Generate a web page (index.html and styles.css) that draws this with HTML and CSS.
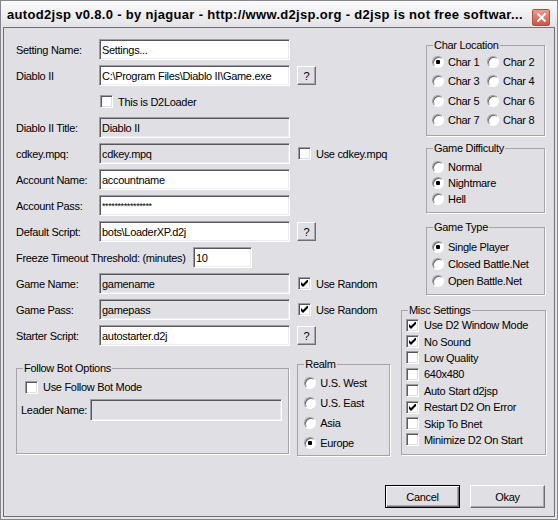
FILE: index.html
```html
<!DOCTYPE html>
<html lang="en">
<head>
	<meta charset="utf-8">
	<title>autod2jsp</title>
	<link rel="stylesheet" href="styles.css">
</head>
<body>
	<div class="window">
		<div class="titlebar">
			<span class="title">autod2jsp v0.8.0 - by njaguar - http://www.d2jsp.org - d2jsp is not free softwar...</span>
			<button class="close">
				<svg width="11" height="11" viewBox="0 0 11 11"><path d="M1.5 1.5 L9.5 9.5 M9.5 1.5 L1.5 9.5" stroke="#fff" stroke-width="2"/></svg>
			</button>
		</div>

		<div class="client">
			<div class="main">
				<div class="left">
					<div class="form">
						<label>Setting Name:</label>
						<input class="field" value="Settings...">
						<span></span>

						<label>Diablo II</label>
						<input class="field" value="C:\Program Files\Diablo II\Game.exe">
						<span class="extra"><button class="btn q">?</button></span>

						<span></span>
						<label class="check"><input type="checkbox"> This is D2Loader</label>
						<span></span>

						<label>Diablo II Title:</label>
						<input class="field" value="Diablo II" disabled>
						<span></span>

						<label>cdkey.mpq:</label>
						<input class="field" value="cdkey.mpq" disabled>
						<span class="extra"><label class="check"><input type="checkbox"> Use cdkey.mpq</label></span>

						<label>Account Name:</label>
						<input class="field" value="accountname">
						<span></span>

						<label>Account Pass:</label>
						<input class="field pass" value="****************">
						<span></span>

						<label>Default Script:</label>
						<input class="field" value="bots\LoaderXP.d2j">
						<span class="extra"><button class="btn q">?</button></span>

						<div class="freeze">
							<label>Freeze Timeout Threshold: (minutes)</label>
							<input class="field short" value="10">
						</div>

						<label>Game Name:</label>
						<input class="field" value="gamename" disabled>
						<span class="extra"><label class="check"><input type="checkbox" checked> Use Random</label></span>

						<label>Game Pass:</label>
						<input class="field" value="gamepass" disabled>
						<span class="extra"><label class="check"><input type="checkbox" checked> Use Random</label></span>

						<label>Starter Script:</label>
						<input class="field" value="autostarter.d2j">
						<span class="extra"><button class="btn q">?</button></span>
					</div>

					<div class="lower">
						<fieldset class="follow">
							<legend>Follow Bot Options</legend>
							<div class="follow-body">
								<label class="check follow-check"><input type="checkbox"> Use Follow Bot Mode</label>
								<div class="leader">
									<label>Leader Name:</label>
									<input class="field leader-field" disabled>
								</div>
							</div>
						</fieldset>

						<fieldset class="realm">
							<legend>Realm</legend>
							<div class="list realm-list">
								<label class="opt"><input type="radio" name="realm"> U.S. West</label>
								<label class="opt"><input type="radio" name="realm"> U.S. East</label>
								<label class="opt"><input type="radio" name="realm"> Asia</label>
								<label class="opt"><input type="radio" name="realm" checked> Europe</label>
							</div>
						</fieldset>
					</div>
				</div>

				<div class="right">
					<fieldset class="small chars">
						<legend>Char Location</legend>
						<div class="char-grid">
							<label class="opt"><input type="radio" name="char" checked> Char 1</label>
							<label class="opt"><input type="radio" name="char"> Char 2</label>
							<label class="opt"><input type="radio" name="char"> Char 3</label>
							<label class="opt"><input type="radio" name="char"> Char 4</label>
							<label class="opt"><input type="radio" name="char"> Char 5</label>
							<label class="opt"><input type="radio" name="char"> Char 6</label>
							<label class="opt"><input type="radio" name="char"> Char 7</label>
							<label class="opt"><input type="radio" name="char"> Char 8</label>
						</div>
					</fieldset>

					<fieldset class="small difficulty">
						<legend>Game Difficulty</legend>
						<div class="list">
							<label class="opt"><input type="radio" name="diff"> Normal</label>
							<label class="opt"><input type="radio" name="diff" checked> Nightmare</label>
							<label class="opt"><input type="radio" name="diff"> Hell</label>
						</div>
					</fieldset>

					<fieldset class="small gametype">
						<legend>Game Type</legend>
						<div class="list">
							<label class="opt"><input type="radio" name="type" checked> Single Player</label>
							<label class="opt"><input type="radio" name="type"> Closed Battle.Net</label>
							<label class="opt"><input type="radio" name="type"> Open Battle.Net</label>
						</div>
					</fieldset>

					<fieldset class="misc">
						<legend>Misc Settings</legend>
						<div class="list">
							<label class="opt"><input type="checkbox" checked> Use D2 Window Mode</label>
							<label class="opt"><input type="checkbox" checked> No Sound</label>
							<label class="opt"><input type="checkbox"> Low Quality</label>
							<label class="opt"><input type="checkbox"> 640x480</label>
							<label class="opt"><input type="checkbox"> Auto Start d2jsp</label>
							<label class="opt"><input type="checkbox" checked> Restart D2 On Error</label>
							<label class="opt"><input type="checkbox"> Skip To Bnet</label>
							<label class="opt"><input type="checkbox"> Minimize D2 On Start</label>
						</div>
					</fieldset>
				</div>
			</div>

			<div class="footer">
				<button class="btn big default">Cancel</button>
				<button class="btn big">Okay</button>
			</div>
		</div>
	</div>
</body>
</html>
```

FILE: styles.css
```css
* {
	box-sizing: border-box;
}

body {
	margin: 0;
	background: #ffffff;
	font-family: "Liberation Sans", Arial, sans-serif;
	font-size: 11px;
	letter-spacing: -0.3px;
	color: #000000;
}

/* window frame */

.window {
	width: 558px;
	height: 520px;
	border: 1px solid #85858b;
	background: #e6e6ea;
	display: flex;
	flex-direction: column;
}

.titlebar {
	height: 26px;
	flex: none;
	display: flex;
	align-items: center;
	padding: 0 6px 0 6px;
	background: linear-gradient(#fbfbfc, #e3e3e7);
}

.title {
	flex: 1;
	font-weight: bold;
	font-size: 13px;
	letter-spacing: 0.32px;
	white-space: nowrap;
	overflow: hidden;
}

.close {
	width: 20px;
	height: 19px;
	padding: 0;
	margin-top: 7px;
	display: flex;
	align-items: center;
	justify-content: center;
	border: 1px solid #f3f3f5;
	border-radius: 3px;
	background: linear-gradient(#e9a394, #c9503f);
	box-shadow: inset 0 0 0 1px #b5493c;
}

.client {
	flex: 1;
	margin: 0 2px 2px;
	border: 1px solid #6f6f75;
	background: #e0dfe3;
	display: flex;
	flex-direction: column;
}

.main {
	display: flex;
	gap: 11px;
	padding: 11px 0 0 12px;
}

.left {
	width: 374px;
}

.right {
	width: 145px;
}

/* form rows */

.form {
	display: grid;
	grid-template-columns: 83px 191px 1fr;
	grid-auto-rows: 21px;
	row-gap: 5px;
	align-items: center;
}

.extra {
	padding-left: 7px;
	display: flex;
	align-items: center;
}

.freeze {
	grid-column: 1 / -1;
	display: flex;
	align-items: center;
}

.freeze label {
	width: 177px;
	white-space: nowrap;
}

.field {
	height: 21px;
	width: 191px;
	font: inherit;
	letter-spacing: inherit;
	padding: 0 2px;
	border: 1px solid;
	border-color: #9d9da1 #ffffff #ffffff #9d9da1;
	box-shadow: inset 1px 1px 0 #58585c, inset -1px -1px 0 #ececf0;
	background: #ffffff;
	color: #000000;
	outline: none;
}

.field:disabled {
	background: #e0dfe3;
	color: #000000;
}

.field.short {
	width: 59px;
}

.field.pass {
	font-size: 9px;
	letter-spacing: -0.4px;
}

/* buttons */

.btn {
	font: inherit;
	letter-spacing: inherit;
	color: #000000;
	background: #e0dfe3;
	padding: 0;
	border: 1px solid;
	border-color: #ffffff #6e6e72 #6e6e72 #ffffff;
	box-shadow: inset -1px -1px 0 #a7a6aa;
}

.q {
	width: 19px;
	height: 19px;
}

.big {
	width: 75px;
	height: 23px;
}

.default {
	border: 1px solid #000000;
	box-shadow: inset 1px 1px 0 #ffffff, inset -1px -1px 0 #6e6e72, inset -2px -2px 0 #a7a6aa;
}

.footer {
	margin-top: auto;
	display: flex;
	justify-content: flex-end;
	gap: 10px;
	padding: 0 9px 8px 0;
}

/* checkboxes and radios */

.check,
.opt {
	display: flex;
	align-items: center;
	white-space: nowrap;
}

input[type="checkbox"] {
	appearance: none;
	width: 13px;
	height: 13px;
	margin: 0 5px 0 0;
	flex: none;
	background: #ffffff;
	border: 1px solid;
	border-color: #9d9da1 #ffffff #ffffff #9d9da1;
	box-shadow: inset 1px 1px 0 #58585c, inset -1px -1px 0 #e0dfe3;
}

input[type="checkbox"]:checked {
	background: #ffffff url("data:image/svg+xml,%3Csvg xmlns='http://www.w3.org/2000/svg' width='7' height='7' viewBox='0 0 7 7'%3E%3Cpath d='M0 2 L2 4 L7 -1 L7 2 L2 7 L0 5 Z' fill='%23000'/%3E%3C/svg%3E") no-repeat center;
}

.form .check input {
	margin-left: 1px;
}

input[type="radio"] {
	appearance: none;
	width: 12px;
	height: 12px;
	margin: 0 4px 0 0;
	flex: none;
	border-radius: 50%;
	background: #ffffff;
	border: 1px solid;
	border-color: #9d9da1 #ffffff #ffffff #9d9da1;
	box-shadow: inset 1px 1px 0 #6a6a6e;
}

input[type="radio"]:checked {
	background: radial-gradient(circle, #000000 0 2px, #ffffff 2.5px);
}

/* group boxes */

fieldset {
	margin: 0;
	padding: 0 0 5px 0;
	min-width: 0;
	border: 1px solid #a5a5a9;
	box-shadow: 1px 1px 0 #ffffff;
}

legend {
	margin-left: 6px;
	padding: 0 1px;
	line-height: 13px;
}

.small {
	width: 119px;
	margin-left: 25px;
}

.char-grid {
	display: grid;
	grid-template-columns: 55px 1fr;
	grid-auto-rows: 19.5px;
	padding-left: 5px;
}

.list {
	display: grid;
	padding-left: 5px;
}

.difficulty {
	margin-top: 6px;
}

.difficulty .list {
	grid-auto-rows: 16px;
	padding-top: 4px;
}

.gametype {
	margin-top: 8px;
}

.gametype .list {
	grid-auto-rows: 17px;
	padding-top: 4px;
}

.misc {
	width: 145px;
	margin-top: 9px;
	padding-bottom: 6px;
}

.misc .list {
	grid-auto-rows: 16.4px;
	padding-left: 4px;
}

.lower {
	display: flex;
	align-items: flex-start;
	gap: 8px;
	margin-top: 12px;
}

.follow {
	width: 274px;
	margin-top: 4px;
	padding-bottom: 32px;
}

.follow-body {
	padding: 4px 0 0 4px;
}

.follow-check {
	height: 16px;
	padding-left: 4px;
}

.leader {
	display: flex;
	align-items: center;
	margin-top: 4px;
}

.leader label {
	width: 69px;
}

.leader-field {
	width: 192px;
	height: 22px;
}

.realm {
	width: 93px;
	padding-bottom: 2px;
}

.realm-list {
	grid-auto-rows: 20px;
	padding: 2px 0 0 6px;
}
```
